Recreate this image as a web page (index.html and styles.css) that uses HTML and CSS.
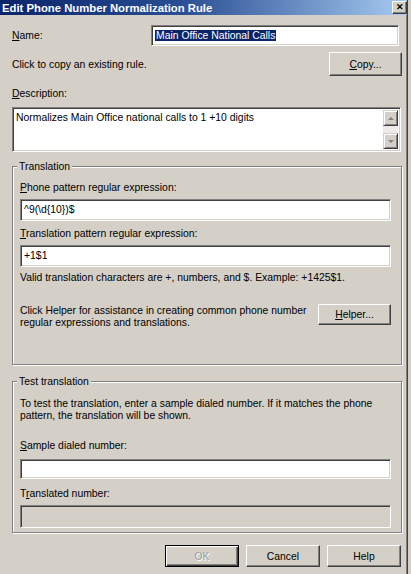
FILE: index.html
```html
<!DOCTYPE html>
<html>
<head>
<meta charset="utf-8">
<link rel="stylesheet" href="styles.css">
</head>
<body>
<div class="window">
  <div class="frame">
    <div class="titlebar">
      <span class="title">Edit Phone Number Normalization Rule</span>
      <span class="close">&#x2715;</span>
    </div>
    <div class="content">
      <div class="row name-row">
        <span class="label"><u>N</u>ame:</span>
        <div class="field name-field"><span class="sel">Main Office National Calls</span></div>
      </div>
      <div class="row copy-row">
        <span class="label">Click to copy an existing rule.</span>
        <div class="btn copy-btn"><u>C</u>opy...</div>
      </div>
      <div class="label desc-label"><u>D</u>escription:</div>
      <div class="field memo">
        <div class="memo-text">Normalizes Main Office national calls to 1 +10 digits</div>
        <div class="scrollbar">
          <div class="sbtn"><span class="arrow up"></span></div>
          <div class="track"></div>
          <div class="sbtn"><span class="arrow down"></span></div>
        </div>
      </div>

      <fieldset class="group translation">
        <legend>Translation</legend>
        <div class="label first"><u>P</u>hone pattern regular expression:</div>
        <div class="field in-group f1">^9(\d{10})$</div>
        <div class="label l2"><u>T</u>ranslation pattern regular expression:</div>
        <div class="field in-group f2">+1$1</div>
        <div class="label l3">Valid translation characters are +, numbers, and $. Example: +1425$1.</div>
        <div class="helper-row">
          <div class="label helper-text">Click Helper for assistance in creating common phone number regular expressions and translations.</div>
          <div class="btn helper-btn"><u>H</u>elper...</div>
        </div>
      </fieldset>

      <fieldset class="group test">
        <legend>Test translation</legend>
        <div class="label test-text">To test the translation, enter a sample dialed number. If it matches the phone pattern, the translation will be shown.</div>
        <div class="label l-sample"><u>S</u>ample dialed number:</div>
        <div class="field in-group f3"></div>
        <div class="label l-trans">T<u>r</u>anslated number:</div>
        <div class="field in-group disabled f4"></div>
      </fieldset>

      <div class="buttons">
        <div class="btn default disabled-btn">OK</div>
        <div class="btn">Cancel</div>
        <div class="btn">Help</div>
      </div>
    </div>
  </div>
</div>
</body>
</html>
```

FILE: styles.css
```css
* { box-sizing: border-box; }
html, body {
  margin: 0;
  padding: 0;
  background: #d4d0c8;
}
body {
  font-family: "Liberation Sans", Arial, sans-serif;
  font-size: 10.4px;
  color: #000;
}
.window {
  width: 411px;
  height: 574px;
  background: #d4d0c8;
  display: flex;
}
.frame {
  width: 408px;
  height: 574px;
  border-right: 1px solid #404040;
  box-shadow: inset -1px 0 0 #808080;
}
.titlebar {
  height: 15px;
  background: linear-gradient(to right, #0a246a 0%, #2a4f94 45%, #a6caf0 100%);
  display: flex;
  align-items: center;
  justify-content: space-between;
  padding: 0 0 0 2px;
}
.title {
  color: #fff;
  font-weight: bold;
  font-size: 11.3px;
  font-family: "Liberation Sans", Arial, sans-serif;
}
.close {
  width: 15px;
  height: 13px;
  margin-right: 0;
  background: #d4d0c8;
  border: 1px solid;
  border-color: #fff #404040 #404040 #fff;
  box-shadow: inset -1px -1px 0 #808080;
  font-size: 9px;
  font-weight: bold;
  line-height: 11px;
  text-align: center;
  color: #000;
}
.content {
  padding: 0 5px 0 12px;
}
.row {
  display: flex;
  align-items: center;
  justify-content: space-between;
}
.label {
  line-height: 13px;
  white-space: nowrap;
}
u { text-decoration: underline; text-underline-offset: 1px; }

.field {
  background: #fff;
  border: 1px solid;
  border-color: #808080 #fff #fff #808080;
  box-shadow: inset 1px 1px 0 #404040, inset -1px -1px 0 #d4d0c8;
  padding: 3px 3px 0 3px;
  line-height: 14px;
}
.name-row { margin-top: 10px; }
.name-field {
  width: 248px;
  height: 21px;
  margin-right: 3px;
}
.sel {
  background: #0a246a;
  color: #fff;
  padding: 0 1px;
}
.copy-row { margin-top: 6px; }
.btn {
  width: 73px;
  height: 24px;
  background: #d4d0c8;
  border: 1px solid;
  border-color: #fff #404040 #404040 #fff;
  box-shadow: inset -1px -1px 0 #808080;
  display: flex;
  align-items: center;
  justify-content: center;
}
.desc-label { margin-top: 11px; }
.memo {
  margin-top: 7px;
  height: 45px;
  width: 389px;
  display: flex;
  padding: 2px 2px 2px 2px;
}
.memo-text {
  flex: 1;
  padding: 1px 0 0 1px;
  line-height: 13px;
}
.scrollbar {
  width: 15px;
  display: flex;
  flex-direction: column;
}
.sbtn {
  height: 16px;
  background: #d4d0c8;
  border: 1px solid;
  border-color: #d4d0c8 #404040 #404040 #d4d0c8;
  box-shadow: inset 1px 1px 0 #fff, inset -1px -1px 0 #808080;
  display: flex;
  align-items: center;
  justify-content: center;
}
.track {
  flex: 1;
  background: #ecebe7;
}
.arrow {
  width: 0;
  height: 0;
  border-left: 3px solid transparent;
  border-right: 3px solid transparent;
}
.arrow.up { border-bottom: 3px solid #808080; }
.arrow.down { border-top: 3px solid #808080; }

.group {
  margin: 0;
  width: 390px;
  border: 1px solid #808080;
  box-shadow: inset 1px 1px 0 #fff, 1px 1px 0 #fff;
  padding: 0 10px 0 7px;
}
.group legend {
  padding: 0 2px;
  margin-left: -3px;
  line-height: 13px;
  background: #d4d0c8;
}
.translation {
  margin-top: 8px;
  height: 205px;
}
.label.first { margin-top: 8px; }
.in-group {
  width: 371px;
}
.f1 { margin-top: 5px; height: 22px; }
.l2 { margin-top: 6px; }
.f2 { margin-top: 5px; height: 22px; }
.l3 { margin-top: 4px; }
.helper-row {
  margin-top: 21px;
  display: flex;
  justify-content: space-between;
  align-items: flex-start;
}
.helper-text {
  white-space: normal;
  width: 292px;
  line-height: 12px;
}
.helper-btn {
  height: 21px;
  margin-top: -1px;
}
.test {
  margin-top: 10px;
  height: 158px;
}
.test-text {
  white-space: normal;
  margin-top: 10px;
  line-height: 12px;
}
.l-sample { margin-top: 17px; }
.f3 { margin-top: 7px; height: 20px; }
.l-trans { margin-top: 8px; }
.f4 { margin-top: 5px; height: 23px; }
.field.disabled {
  background: #d4d0c8;
}
.buttons {
  margin-top: 12px;
  display: flex;
  justify-content: flex-end;
  gap: 7px;
  padding-right: 1px;
}
.buttons .btn {
  width: 74px;
  height: 22px;
}
.btn.default {
  border: 1px solid #000;
  box-shadow: inset 1px 1px 0 #fff, inset -1px -1px 0 #404040, inset -2px -2px 0 #808080;
}
.disabled-btn {
  color: #a09c94;
  text-shadow: 1px 1px 0 #fff;
}
```
